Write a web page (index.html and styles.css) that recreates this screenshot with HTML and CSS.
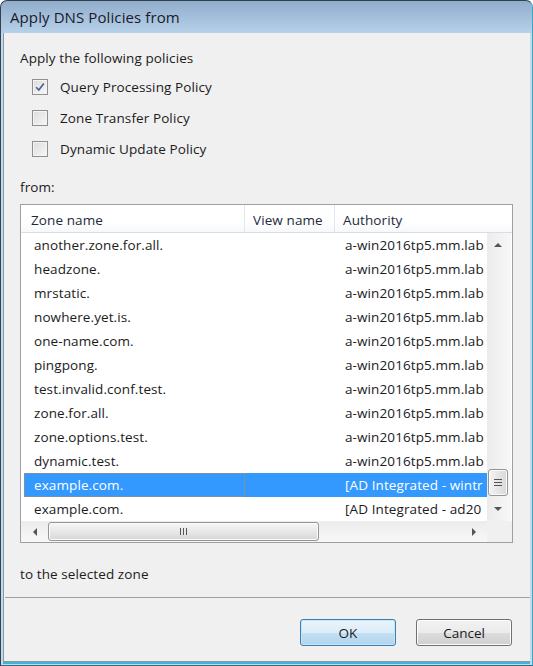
FILE: index.html
```html
<!DOCTYPE html>
<html>
<head>
<meta charset="utf-8">
<link rel="stylesheet" href="styles.css">
</head>
<body>
<div class="window">
  <div class="titlebar"><span class="title">Apply DNS Policies from</span></div>
  <div class="client">
    <div class="main">
      <div class="label heading">Apply the following policies</div>
      <div class="checks">
        <div class="check"><span class="box"><svg width="12" height="12" viewBox="0 0 12 12"><path d="M2.2 6.2 L4.8 9 L9.8 2.4" fill="none" stroke="#4a5e96" stroke-width="1.6"/></svg></span><span>Query Processing Policy</span></div>
        <div class="check"><span class="box"></span><span>Zone Transfer Policy</span></div>
        <div class="check"><span class="box"></span><span>Dynamic Update Policy</span></div>
      </div>
      <div class="label from">from:</div>
      <div class="listview">
        <div class="lv-header">
          <div class="hcol h1">Zone name</div>
          <div class="hcol h2">View name</div>
          <div class="hcol h3">Authority</div>
        </div>
        <div class="lv-body">
          <div class="rows">
            <div class="row"><span class="c1">another.zone.for.all.</span><span class="c2"></span><span class="c3">a-win2016tp5.mm.lab</span></div>
            <div class="row"><span class="c1">headzone.</span><span class="c2"></span><span class="c3">a-win2016tp5.mm.lab</span></div>
            <div class="row"><span class="c1">mrstatic.</span><span class="c2"></span><span class="c3">a-win2016tp5.mm.lab</span></div>
            <div class="row"><span class="c1">nowhere.yet.is.</span><span class="c2"></span><span class="c3">a-win2016tp5.mm.lab</span></div>
            <div class="row"><span class="c1">one-name.com.</span><span class="c2"></span><span class="c3">a-win2016tp5.mm.lab</span></div>
            <div class="row"><span class="c1">pingpong.</span><span class="c2"></span><span class="c3">a-win2016tp5.mm.lab</span></div>
            <div class="row"><span class="c1">test.invalid.conf.test.</span><span class="c2"></span><span class="c3">a-win2016tp5.mm.lab</span></div>
            <div class="row"><span class="c1">zone.for.all.</span><span class="c2"></span><span class="c3">a-win2016tp5.mm.lab</span></div>
            <div class="row"><span class="c1">zone.options.test.</span><span class="c2"></span><span class="c3">a-win2016tp5.mm.lab</span></div>
            <div class="row"><span class="c1">dynamic.test.</span><span class="c2"></span><span class="c3">a-win2016tp5.mm.lab</span></div>
            <div class="row selected"><span class="c1 focus">example.com.</span><span class="c2"></span><span class="c3">[AD Integrated - wintr</span></div>
            <div class="row"><span class="c1">example.com.</span><span class="c2"></span><span class="c3">[AD Integrated - ad20</span></div>
          </div>
          <div class="vscroll">
            <div class="arrow-box"><span class="tri up"></span></div>
            <div class="vtrack"><div class="vthumb"><span class="grip-h"></span><span class="grip-h"></span><span class="grip-h"></span></div></div>
            <div class="arrow-box"><span class="tri down"></span></div>
          </div>
        </div>
        <div class="lv-bottom">
          <div class="hscroll">
            <div class="harrow"><span class="tri left"></span></div>
            <div class="htrack"><div class="hthumb"><span class="grip-v"></span><span class="grip-v"></span><span class="grip-v"></span></div></div>
            <div class="harrow"><span class="tri right"></span></div>
          </div>
          <div class="corner"></div>
        </div>
      </div>
      <div class="label to">to the selected zone</div>
    </div>
    <div class="footer">
      <button class="btn default">OK</button>
      <button class="btn">Cancel</button>
    </div>
  </div>
</div>
</body>
</html>
```

FILE: styles.css
```css
* { box-sizing: border-box; }
html, body { margin: 0; padding: 0; background: #ffffff; }
body { font-family: "Open Sans", "Noto Sans", sans-serif; font-size: 13.5px; letter-spacing: 0.1px; color: #1b1b1b; }

.window {
  width: 533px;
  height: 666px;
  border: 1px solid #34414f;
  border-right-color: #3aa7c7;
  border-bottom: 1px solid #2a6f86;
  border-radius: 7px 7px 0 0;
  background: linear-gradient(#90adcb 0, #b7d1ea 32px, #c3d9ec 32px, #c3d9ec 100%);
  display: flex;
  flex-direction: column;
  overflow: hidden;
}
.titlebar {
  height: 32px;
  flex: none;
  display: flex;
  align-items: center;
  padding-left: 9px;
}
.title { font-size: 15px; color: #1a1a2a; letter-spacing: 0.1px; }

.client {
  flex: 1;
  margin: 0 2px 3px 2px;
  background: #f0f0f0;
  border-left: 1px solid #8a96a2;
  border-bottom: 1px solid #8a96a2;
  box-shadow: 0 2px 0 0 #3fb3d5;
  display: flex;
  flex-direction: column;
}
.main {
  flex: 1;
  padding: 16px 17px 0 16px;
}
.label { line-height: 18px; height: 18px; }
.checks { margin-top: 4px; padding-left: 12px; }
.check { height: 31px; display: flex; align-items: center; gap: 12px; }
.box {
  width: 16px; height: 16px;
  border: 1px solid #8e8f8f;
  background: linear-gradient(135deg, #dcdcdc, #f7f7f7);
  box-shadow: inset 0 0 0 1px #f4f4f4;
  display: flex; align-items: center; justify-content: center;
}
.from { margin-top: 14px; }

.listview {
  margin-top: 8px;
  width: 493px;
  height: 339px;
  border: 1px solid #9c9fa4;
  background: #ffffff;
  display: flex;
  flex-direction: column;
}
.lv-header {
  height: 28px;
  flex: none;
  display: flex;
  border-bottom: 1px solid #d8dde3;
  background: linear-gradient(#ffffff, #ffffff 60%, #f7f8fa);
}
.hcol { height: 100%; display: flex; align-items: center; padding-top: 3px; color: #1e2a3a; }
.h1 { width: 224px; padding-left: 10px; border-right: 1px solid #e3e6ea; }
.h2 { width: 90px; padding-left: 8px; border-right: 1px solid #e3e6ea; }
.h3 { flex: 1; padding-left: 8px; }

.lv-body { height: 288px; flex: none; display: flex; }
.rows { width: 466px; overflow: hidden; }
.row { height: 24px; margin-left: 3px; display: flex; align-items: center; white-space: nowrap; }
.row .c1 { width: 221px; padding-left: 9px; height: 24px; line-height: 22px; border: 1px solid transparent; }
.row .c2 { width: 90px; }
.row .c3 { flex: 1; padding-left: 10px; overflow: hidden; }
.row.selected { background: #3399ff; color: #ffffff; }
.row .focus { border: 1px dotted #c28a46; }

.vscroll {
  width: 24px;
  display: flex;
  flex-direction: column;
  background: linear-gradient(90deg, #ececec, #f7f7f7);
}
.arrow-box { height: 24px; display: flex; align-items: center; justify-content: center; padding-right: 2px; }
.vtrack { flex: 1; display: flex; flex-direction: column; justify-content: flex-end; padding-bottom: 1px; }
.vthumb {
  height: 27px;
  margin: 0 3px 0 1px;
  border: 1px solid #959595;
  border-radius: 3px;
  background: linear-gradient(90deg, #f4f4f4, #e6e6e6 50%, #d8d8d8);
  box-shadow: inset 0 0 0 1px #fbfbfb;
  display: flex; flex-direction: column; align-items: center; justify-content: center; gap: 2px;
}
.grip-h { width: 8px; height: 1px; background: #555; }

.tri { width: 0; height: 0; border-style: solid; }
.tri.up { border-width: 0 4px 4px 4px; border-color: transparent transparent #555 transparent; }
.tri.down { border-width: 4px 4px 0 4px; border-color: #555 transparent transparent transparent; }
.tri.left { border-width: 4px 4px 4px 0; border-color: transparent #555 transparent transparent; }
.tri.right { border-width: 4px 0 4px 4px; border-color: transparent transparent transparent #555; }

.lv-bottom { flex: 1; display: flex; }
.hscroll {
  width: 466px;
  display: flex;
  background: linear-gradient(#ececec, #f7f7f7);
}
.harrow { width: 27px; display: flex; align-items: center; justify-content: center; }
.htrack { flex: 1; display: flex; align-items: center; }
.hthumb {
  width: 271px; height: 19px;
  border: 1px solid #959595;
  border-radius: 3px;
  background: linear-gradient(#f6f6f6, #e8e8e8 50%, #d6d6d6);
  box-shadow: inset 0 0 0 1px #fbfbfb;
  display: flex; align-items: center; justify-content: center; gap: 2px;
}
.grip-v { width: 1px; height: 7px; background: #555; }
.corner { flex: 1; background: #f0f0f0; }

.to { margin-top: 22px; }

.footer {
  height: 64px;
  flex: none;
  border-top: 1px solid #a0a0a0;
  margin-left: 1px;
  display: flex;
  justify-content: flex-end;
  align-items: flex-start;
  gap: 20px;
  padding: 21px 18px 0 0;
}
.btn {
  width: 96px; height: 27px;
  font-family: "Open Sans", "Noto Sans", sans-serif;
  font-size: 13.5px;
  color: #1b1b1b;
  border: 1px solid #707070;
  border-radius: 3px;
  background: linear-gradient(#f2f2f2, #ebebeb 50%, #dddddd 50%, #cfcfcf);
  box-shadow: inset 0 0 0 1px #fcfcfc;
  padding: 0;
}
.btn.default {
  border-color: #3c7fb1;
  background: linear-gradient(#eaf4fb, #dcecf8 50%, #c4e0f3 50%, #b0d3ee);
  box-shadow: inset 0 0 0 1px #c7e6f9;
}
```
